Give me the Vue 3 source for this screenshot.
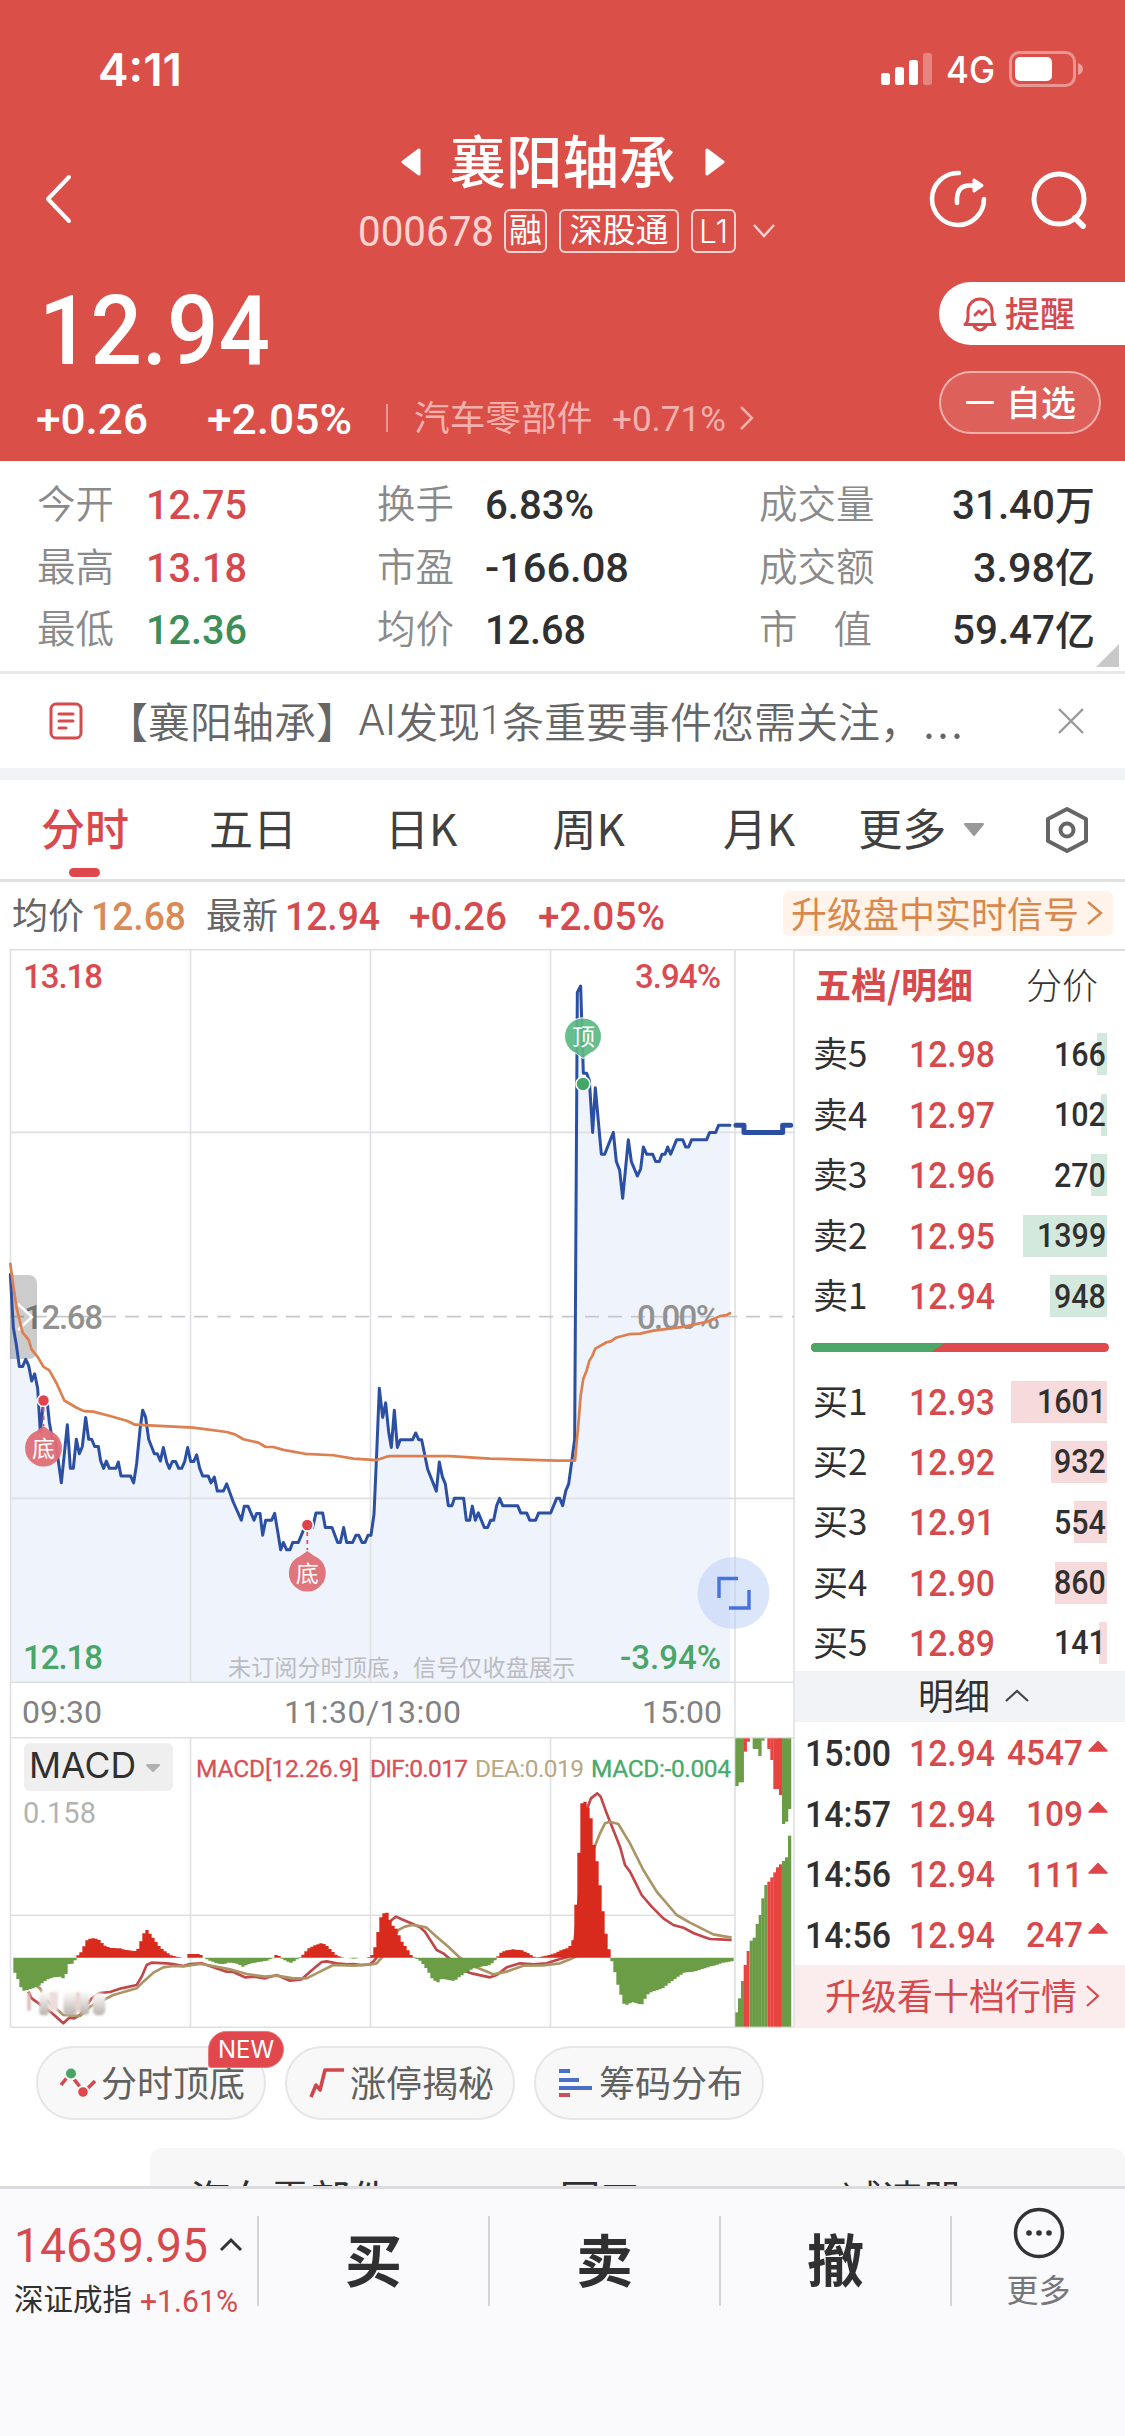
<script setup>
import { h } from 'vue'

// Condensed numeral label: cap height is centred in a box of the font size.
const Num = ({ t, w, s, b = 500, f = 'Roboto' }) =>
  h('svg', { width: w, height: s, viewBox: `0 0 ${w} ${s}`, style: 'display:block;flex:none;overflow:visible' }, [
    h('text', {
      x: 0, y: s * 0.856, 'font-size': s, 'font-weight': b, fill: 'currentColor',
      'font-family': `${f}, "Liberation Sans", sans-serif`, textLength: w, lengthAdjust: 'spacingAndGlyphs'
    }, t)
  ])
Num.props = ['t', 'w', 's', 'b', 'f']

const stats = [
  ['今开', '12.75', 101, 'red', '换手', '6.83%', 109, '成交量', '31.40', 103, '万'],
  ['最高', '13.18', 101, 'red', '市盈', '-166.08', 144, '成交额', '3.98', 82, '亿'],
  ['最低', '12.36', 101, 'green', '均价', '12.68', 101, '市值', '59.47', 103, '亿']
]
const tabs = ['分时', '五日', '日K', '周K', '月K']
const sells = [
  ['卖5', '12.98', '166', 10], ['卖4', '12.97', '102', 6], ['卖3', '12.96', '270', 16],
  ['卖2', '12.95', '1399', 84], ['卖1', '12.94', '948', 57]
]
const buys = [
  ['买1', '12.93', '1601', 96], ['买2', '12.92', '932', 56], ['买3', '12.91', '554', 33],
  ['买4', '12.90', '860', 52], ['买5', '12.89', '141', 8]
]
const deals = [['15:00', '4547'], ['14:57', '109'], ['14:56', '111'], ['14:56', '247']]

// Series are kept on a fine grid (3 units per pixel); PM values start 1170 units in.
const PM = 1170
const join = (am, pm) => {
  const out = []
  for (let i = 0; i < am.length; i += 2) out.push([am[i], am[i + 1]])
  for (let i = 0; i < pm.length; i += 2) out.push([pm[i] + PM, pm[i + 1]])
  return out
}
const path = pts => 'M' + pts.map(p => p.join(' ')).join('L')

const price = join(
  [31,690,40,800,49,835,58,880,68,880,77,865,86,878,95,910,104,895,113,925,121,1015,130,955,142,955,148,995,157,1030,166,1030,184,1120,202,1000,211,1090,220,1090,229,1030,238,1060,247,1045,257,985,266,1030,275,1030,284,1045,295,1045,302,1075,311,1090,319,1075,328,1090,348,1090,355,1077,363,1106,392,1106,401,1120,410,1080,420,1010,428,970,437,985,446,1030,463,1060,472,1060,481,1075,490,1047,500,1077,508,1090,517,1076,527,1076,536,1090,545,1090,554,1076,563,1047,572,1076,581,1076,590,1062,599,1090,608,1106,625,1106,633,1120,643,1108,652,1137,670,1137,680,1122,700,1160,724,1197,733,1168,744,1168,762,1197,770,1183,780,1183,788,1228,797,1197,815,1197,824,1183,833,1220,842,1258,850,1243,860,1258,870,1258,878,1243,895,1243,912,1215,921,1207,938,1212,948,1182,968,1182,976,1212,996,1212,1013,1243,1021,1243,1031,1212,1040,1243,1058,1243,1068,1228,1076,1228,1086,1243,1095,1243,1104,1228,1113,1228,1122,1185,1130,1060,1138,925,1148,985,1157,955,1166,1015],
  [4,1047,13,970,22,1047,31,1031,68,1031,77,1017,86,1031,95,1031,113,1092,139,1137,148,1077,157,1107,166,1122,175,1167,186,1167,193,1152,221,1152,229,1197,239,1197,247,1168,256,1197,265,1182,283,1212,293,1212,302,1197,311,1197,320,1167,329,1152,338,1167,383,1167,392,1182,410,1182,419,1197,437,1197,446,1182,482,1182,500,1152,509,1152,518,1167,527,1137,536,1122,545,1077,554,1030,562,108,572,95,580,275,590,275,598,290,608,397,616,305,634,442,644,442,670,397,679,457,689,475,698,533,715,412,724,457,742,487,752,472,760,427,770,442,788,442,797,457,808,457,816,442,825,442,833,427,842,442,860,412,878,412,887,427,896,427,905,412,950,412,959,397,977,397,986,382,1020,382]
)
const average = join(
  [31,668,38,705,50,760,68,810,86,825,95,845,113,860,130,880,148,888,170,915,193,950,230,965,252,972,280,973,330,982,380,992,405,1000,580,1006,680,1015,705,1020,730,1030,775,1037,797,1046,820,1046,850,1052,915,1060,1000,1063,1060,1070,1130,1073,1160,1066],
  [0,1065,180,1065,300,1070,500,1074,555,1074,565,1000,572,940,580,905,590,888,598,868,607,858,616,843,650,830,662,828,680,820,720,813,750,812,790,806,880,798,950,788,990,776,1010,774,1020,770]
)
const pricePath = path(price)
const areaPath = `${pricePath}V1531H31Z`
const averagePath = path(average)

const dif = path(join(
  [85,965,95,985,155,1028,190,1060,208,1043,222,1045,240,1035,275,985,300,969,330,966,360,956,375,953,410,945,425,920,440,885,455,878,500,880,520,882,550,888,570,882,605,880,640,892,680,905,700,906,735,922,760,920,795,925,830,915,870,932,905,928,930,905,965,876,980,874,1010,880,1040,883,1060,882,1085,885,1110,883,1120,875,1130,862,1145,800,1165,760],
  [5,750,18,740,35,748,60,758,75,765,90,772,105,785,140,840,160,850,175,863,230,905,248,911,300,922,320,915,350,892,390,880,430,883,470,880,500,870,530,862,550,850,575,600,590,420,603,385,622,370,632,380,650,430,670,480,690,530,705,585,720,605,755,675,785,710,820,745,850,765,880,773,910,789,940,800,960,807,990,808,1025,810]
))
const dea = path(join(
  [100,940,120,955,135,985,150,1000,190,1035,240,1038,270,1010,310,990,340,975,410,955,430,935,460,908,490,892,520,888,550,889,600,882,640,888,690,898,740,912,795,920,830,917,880,925,920,925,960,905,1000,885,1060,887,1110,884,1130,880,1145,863],
  [5,810,25,780,45,770,65,765,90,768,110,773,140,800,175,830,210,863,255,890,310,913,350,905,400,887,460,886,510,880,540,868,565,855,590,700,610,540,630,490,645,460,660,455,685,462,720,520,760,600,800,665,860,735,900,758,970,793,1025,803]
))
const histogram = join(
  [40,898,57,935,66,963,90,958,115,948,138,930,160,922,184,920,193,930,205,882,220,880,230,860,247,842,257,814,266,806,284,804,300,812,311,825,330,834,360,835,380,841,410,843,420,822,428,795,440,779,455,798,465,812,480,833,500,848,515,857,545,863,562,863,563,852,600,852,608,863,625,870,650,880,668,882,690,877,715,882,728,890,745,882,780,875,800,872,823,863,825,855,835,856,841,864,852,870,872,878,885,872,897,864,905,858,912,850,925,836,935,830,960,820,975,822,990,838,1003,850,1012,858,1030,863,1060,866,1080,864,1105,862,1120,852,1130,808,1140,745,1158,721,1167,745],
  [8,766,22,780,30,808,50,835,60,853,72,862,90,872,105,890,118,910,125,925,143,938,155,925,175,930,193,932,210,920,230,905,250,895,300,885,320,866,328,850,345,842,370,838,395,841,415,850,435,862,445,862,490,852,510,842,535,833,545,822,555,790,562,548,567,548,571,402,586,394,594,415,603,447,612,530,621,577,630,650,639,728,648,795,657,840,663,866,671,890,680,933,690,965,700,1000,712,1005,725,996,755,1004,770,975,785,965,815,957,850,930,880,908,910,905,960,890,1000,878,1030,873]
)
const valueAt = x => {
  const i = histogram.findIndex(p => p[0] >= x)
  if (i <= 0) return histogram[i === 0 ? 0 : histogram.length - 1][1]
  const [x0, y0] = histogram[i - 1]
  const [x1, y1] = histogram[i]
  return y0 + ((y1 - y0) * (x - x0)) / (x1 - x0)
}
let upBars = ''
let downBars = ''
for (let x = 40; x < 2198; x += 9) {
  const y = Math.round(valueAt(x + 4.5))
  const bar = `M${x} 863V${y}h10V863Z`
  if (y < 863) upBars += bar
  else if (y > 864) downBars += bar
}

// Closing-auction volume columns: x, width, length, colour
const G = '#6b9c46'
const R = '#e8433f'
const topCols = [[1036,9,143,G],[1044,17,132,G],[1061,9,40,R],[1070,9,10,R],[1088,18,32,G],[1105,9,53,G],[1114,9,7,G],[1132,9,32,R],[1141,9,65,R],[1150,18,152,R],[1167,9,170,R],[1176,9,257,G],[1185,9,250,G],[1194,9,212,G]]
const lowCols = [[1036,8,1027,G],[1044,9,985,G],[1053,8,933,G],[1061,9,885,R],[1070,8,843,R],[1079,9,812,G],[1088,9,803,G],[1097,9,762,G],[1106,8,735,G],[1114,9,685,G],[1123,8,645,G],[1132,9,635,R],[1141,9,622,R],[1150,9,607,R],[1158,9,592,R],[1167,8,583,R],[1176,9,573,G],[1185,9,562,G],[1194,9,497,G]]
</script>

<template>
  <div class="app">
    <header class="head">
      <div class="status">
        <Num t="4:11" :w="84" :s="45" :b="600" f="Inter" />
        <div class="status-right">
          <svg width="51" height="34" viewBox="0 0 51 34" fill="#fff">
            <rect x="0" y="21" width="9" height="12" rx="2.5" /><rect x="14" y="15" width="9" height="18" rx="2.5" />
            <rect x="28" y="8" width="9" height="25" rx="2.5" /><rect x="42" y="1" width="9" height="32" rx="2.5" opacity=".3" />
          </svg>
          <Num t="4G" :w="49" :s="37" f="Inter" />
          <svg width="75" height="36" viewBox="0 0 75 36">
            <rect x="1.5" y="1.5" width="64" height="33" rx="9" fill="none" stroke="#fff" stroke-opacity=".4" stroke-width="3" />
            <rect x="6" y="6" width="37" height="24" rx="5" fill="#fff" /><path d="M69 12q5 2 5 6t-5 6z" fill="#fff" opacity=".45" />
          </svg>
        </div>
      </div>

      <div class="nav">
        <svg class="back" width="30" height="52" viewBox="0 0 30 52"><path d="M26 4 5 26 26 48" fill="none" stroke="#fff" stroke-width="4" stroke-linecap="round" stroke-linejoin="round" /></svg>
        <div class="nav-mid">
          <div class="title-row">
            <svg width="20" height="28" viewBox="0 0 20 28"><path d="M18 2v24L2 14Z" fill="#fff" stroke="#fff" stroke-width="3" stroke-linejoin="round" /></svg>
            <h1 class="c">襄阳轴承</h1>
            <svg width="20" height="28" viewBox="0 0 20 28"><path d="M2 2v24L18 14Z" fill="#fff" stroke="#fff" stroke-width="3" stroke-linejoin="round" /></svg>
          </div>
          <div class="sub-row">
            <Num class="code" t="000678" :w="136" :s="42" :b="400" />
            <span class="tag t1"><span class="c">融</span></span>
            <span class="tag t2"><span class="c">深股通</span></span>
            <span class="tag t3"><Num t="L1" :w="29" :s="33" :b="300" f="Inter" /></span>
            <svg width="24" height="16" viewBox="0 0 24 16"><path d="m2 2 10 11L22 2" fill="none" stroke="#fff" stroke-opacity=".75" stroke-width="2.5" /></svg>
          </div>
        </div>
        <div class="nav-icons">
          <svg width="60" height="60" viewBox="-30 -30 60 60" fill="none" stroke="#fff" stroke-width="4.6" stroke-linecap="round" stroke-linejoin="round">
            <path d="M1-26A26 26 0 1 0 26 0" /><path d="M-1 4V-1Q0-13.500 11-13.500H18" /><path d="m16-19 8 5.500-8 5.500Z" fill="#fff" stroke-width="3" />
          </svg>
          <svg width="60" height="60" viewBox="-30 -30 60 60" fill="none" stroke="#fff" stroke-width="5" stroke-linecap="round">
            <circle cx="0" cy="0" r="25" /><path d="m16 19 8 8" stroke-width="6" />
          </svg>
        </div>
      </div>

      <div class="quote">
        <div class="quote-left">
          <Num t="12.94" :w="231" :s="97" />
          <div class="chg">
            <Num t="+0.26" :w="112" :s="43" />
            <Num class="ml-pct" t="+2.05%" :w="145" :s="43" />
            <i class="bar"></i>
            <span class="c sector">汽车零部件</span>
            <Num class="ml-sec" t="+0.71%" :w="114" :s="35" :b="400" />
            <svg width="18" height="26" viewBox="0 0 18 26"><path d="m3 2 11 11L3 24" fill="none" stroke="currentColor" stroke-width="2.5" /></svg>
          </div>
        </div>
        <div class="quote-right">
          <div class="remind">
            <svg width="34" height="36" viewBox="0 0 34 36" fill="none" stroke="#d54a4d" stroke-width="3" stroke-linejoin="round" stroke-linecap="round">
              <path d="M2 28.5H32Q29 26 29 21V15A12 12 0 0 0 5 15V21Q5 26 2 28.5Z" /><path d="M11 30q6 8 12 0M12 19l4-4 3 3 4-4" />
            </svg>
            <span class="c">提醒</span>
          </div>
          <div class="watch"><i></i><span class="c">自选</span></div>
        </div>
      </div>
    </header>

    <section class="stats">
      <div v-for="r in stats" :key="r[0]" class="stat">
        <span class="c lab">{{ r[0] }}</span><Num :class="r[3]" :t="r[1]" :w="r[2]" :s="41" />
        <span class="c lab">{{ r[4] }}</span><Num :t="r[5]" :w="r[6]" :s="41" />
        <span class="c lab" :class="{ spread: r[7].length === 2 }"><b v-for="ch in r[7]" :key="ch">{{ ch }}</b></span>
        <span class="val"><Num :t="r[8]" :w="r[9]" :s="41" /><em class="c">{{ r[10] }}</em></span>
      </div>
      <i class="corner"></i>
    </section>

    <section class="notice">
      <svg width="34" height="38" viewBox="0 0 34 38" fill="none" stroke="#d54a4d" stroke-width="3" stroke-linecap="round">
        <rect x="2" y="2" width="30" height="34" rx="5" /><path d="M10 12h14M10 19h14M10 26h7" />
      </svg>
      <p class="c">【襄阳轴承】<Num t="AI" :w="38" :s="42" :b="300" f="Inter" />发现<Num t="1" :w="22" :s="41" :b="300" />条重要事件您需关注，<Num t="..." :w="42" :s="52" :b="300" f="Inter" /></p>
      <svg width="28" height="28" viewBox="0 0 28 28"><path d="M2 2l24 24M26 2 2 26" stroke="#999" stroke-width="2.4" /></svg>
    </section>

    <nav class="tabs">
      <span v-for="(t, i) in tabs" :key="t" class="c tab" :class="{ on: i === 0 }">{{ t }}</span>
      <span class="c tab">更多</span>
      <svg width="24" height="18" viewBox="0 0 24 18"><path d="M3 3h18l-9 11z" fill="#999" stroke="#999" stroke-width="2" stroke-linejoin="round" /></svg>
      <svg class="gear" width="46" height="50" viewBox="-23 -25 46 50" fill="none" stroke="#666" stroke-width="4" stroke-linejoin="round">
        <path d="M0-21 19-11V11L0 21-19 11V-11Z" /><circle r="6.5" />
      </svg>
    </nav>

    <section class="avg">
      <span class="c">均价</span><Num class="orange" t="12.68" :w="95" :s="38" />
      <span class="c new">最新</span><Num class="red" t="12.94" :w="95" :s="38" />
      <Num class="red p1" t="+0.26" :w="98" :s="38" /><Num class="red p2" t="+2.05%" :w="127" :s="38" />
      <div class="upgrade"><span class="c">升级盘中实时信号</span><svg width="16" height="28" viewBox="0 0 16 28"><path d="m1 3 13 11L1 25" fill="none" stroke="#d9884c" stroke-width="2.4" /></svg></div>
    </section>

    <section class="main">
      <svg class="chart" width="795" height="1079" viewBox="0 949 795 1079">
        <defs>
          <filter id="smear" x="-20%" y="-20%" width="140%" height="140%"><feGaussianBlur stdDeviation="2.4" /></filter>
          <linearGradient id="fade" x1="0" y1="0" x2="0" y2="1"><stop offset="0" stop-color="#fff" /><stop offset=".4" stop-color="#e6e2df" /><stop offset="1" stop-color="#b9b2ad" /></linearGradient>
        </defs>
        <g transform="translate(0 940) scale(.33333 .4847)"><path :d="areaPath" fill="#eef3fc" /></g>
        <g stroke="#dfe0e3" stroke-width="1.6" fill="none">
          <path d="M10.5 949V2027M190.5 949V1682M370.5 949V1682M550.5 949V1682M190.5 1738V2027M370.5 1738V2027M550.5 1738V2027M735 949V2027M794 949V2027" />
          <path d="M10 949.8H795M10 1132.4H794M10 1498.4H794M10 1682.3H794M10 1737.7H794M10 1915.3H735M10 2027.2H794" />
          <path d="M10 1316.6H794" stroke="#c6c8cb" stroke-dasharray="14 9" />
        </g>

        <g font-family="Roboto, sans-serif" font-size="33" font-weight="500" fill="#919191">
          <text x="24" y="1328.6" textLength="79">12.68</text><text x="637" y="1328.6" textLength="83">0.00%</text>
        </g>
        <path d="M10 1275H28q9 0 9 9V1350q0 9-9 9H10Z" fill="#000" opacity=".2" />
        <path d="m18 1304 14 13-14 13" fill="none" stroke="#fff" stroke-width="2.5" />

        <g transform="translate(0 940) scale(.33333 .4847)" fill="none" stroke-linejoin="round" stroke-linecap="round">
          <path :d="pricePath" stroke="#2b50a3" stroke-width="3" vector-effect="non-scaling-stroke" />
          <path :d="averagePath" stroke="#dd7f50" stroke-width="2.7" vector-effect="non-scaling-stroke" />
          <path d="M2208 382h24v15h116v-15h24" stroke="#2b50a3" stroke-width="5" vector-effect="non-scaling-stroke" />
        </g>

        <g fill="#e06c75" fill-opacity=".94">
          <path d="M43.5 1426l7 5a18.5 18.5 0 1 1-14 0z" /><path d="M307.3 1551l7 5a18.5 18.5 0 1 1-14 0z" />
        </g>
        <path d="M43.5 1408v18M307.3 1532v18" stroke="#d95560" stroke-width="1.8" stroke-dasharray="4 4" />
        <path d="M583 1058.5l-7-5a18.5 18.5 0 1 1 14 0z" fill="#5cb884" fill-opacity=".92" stroke="#fff" stroke-width="1" />
        <g stroke="#fff" stroke-width="1.6"><circle cx="43.5" cy="1400.5" r="6" fill="#e0434b" /><circle cx="307.3" cy="1525" r="6" fill="#e0434b" /><circle cx="583" cy="1084" r="7" fill="#43a866" /></g>
        <g font-family="'Noto Sans CJK SC', sans-serif" font-size="23" fill="#fff" text-anchor="middle">
          <text x="43.5" y="1457">底</text><text x="307.3" y="1582">底</text><text x="583.5" y="1044.5">顶</text>
        </g>

        <g font-family="Roboto, sans-serif" font-size="33" font-weight="500">
          <g fill="#d94b50"><text x="23" y="987.5" textLength="80">13.18</text><text x="635" y="987.5" textLength="86">3.94%</text></g>
          <g fill="#4aa568"><text x="23" y="1668.5" textLength="80">12.18</text><text x="620" y="1668.5" textLength="101">-3.94%</text></g>
          <g fill="#828282" font-size="32" font-weight="400"><text x="22" y="1722.5" textLength="80">09:30</text><text x="284" y="1722.5" textLength="177">11:30/13:00</text><text x="642" y="1722.5" textLength="80">15:00</text></g>
          <text x="23" y="1823" font-size="29" font-weight="400" fill="#b3b3b3" textLength="73">0.158</text>
        </g>
        <text x="228" y="1676" font-size="23.1" fill="#bbbcc2" font-family="'Noto Sans CJK SC', sans-serif" textLength="347">未订阅分时顶底，信号仅收盘展示</text>

        <rect x="24" y="1743" width="149" height="48" rx="6" fill="#efefef" />
        <text x="29" y="1778" font-family="Inter, sans-serif" font-size="35.5" fill="#303030" textLength="107">MACD</text>
        <path d="M147 1765h12l-6 6z" fill="#b0b0b0" stroke="#b0b0b0" stroke-width="2" stroke-linejoin="round" />
        <g font-family="Roboto, sans-serif" font-size="24.5" font-weight="400">
          <g fill="#d95157" stroke="#d95157" stroke-width=".3"><text x="196" y="1777" textLength="163">MACD[12.26.9]</text><text x="370" y="1777" textLength="98">DIF:0.017</text></g>
          <text x="475" y="1777" fill="#b9a783" textLength="109">DEA:0.019</text><text x="591" y="1777" fill="#47ab6c" stroke="#47ab6c" stroke-width=".3" textLength="140">MACD:-0.004</text>
        </g>

        <g transform="translate(0 1670) scale(.33333)">
          <g fill="none" stroke-width="8" stroke-linejoin="round"><path :d="dif" stroke="#c2474a" /><path :d="dea" stroke="#ab9566" /></g>
          <path :d="upBars" fill="#d92b1d" /><path :d="downBars" :fill="G" />
          <g filter="url(#smear)" fill="url(#fade)">
            <rect x="82" y="966" width="10" height="56" fill="#dcb7b4" /><rect x="118" y="962" width="28" height="74" rx="10" />
            <rect x="148" y="966" width="26" height="58" fill="#efdcda" /><rect x="190" y="962" width="40" height="74" rx="12" />
            <rect x="228" y="966" width="14" height="60" fill="#e8d5cf" /><rect x="240" y="962" width="28" height="72" rx="10" /><rect x="278" y="968" width="38" height="68" rx="16" />
          </g>
          <g transform="translate(1170 0)">
            <rect v-for="(c, i) in topCols" :key="'t' + i" :x="c[0]" y="205" :width="c[1] + .8" :height="c[2]" :fill="c[3]" />
            <rect v-for="(c, i) in lowCols" :key="'l' + i" :x="c[0]" :y="c[2]" :width="c[1] + .8" :height="1070 - c[2]" :fill="c[3]" />
          </g>
        </g>

        <circle cx="733.5" cy="1593" r="36" fill="#b9cdf8" opacity=".5" />
        <path d="M719 1598V1578.5H738M729 1608H749V1590" fill="none" stroke="#4673e0" stroke-width="3.4" />
      </svg>

      <aside class="book">
        <div class="book-head"><span class="c">五档/明细</span><span class="c thin">分价</span></div>
        <div v-for="r in sells" :key="r[0]" class="level">
          <span class="c">{{ r[0] }}</span><Num class="red" :t="r[1]" :w="86" :s="36" />
          <span class="vol"><i class="depth down" :style="{ width: r[3] + 'px' }"></i><Num :t="r[2]" :w="r[2].length * 17.3" :s="33" /></span>
        </div>
        <svg class="ratio" width="298" height="9" viewBox="0 0 298 9">
          <rect width="298" height="9" rx="4.5" fill="#de4a4d" /><path d="M4.5 0H134L120 9H4.5A4.5 4.5 0 0 1 4.5 0Z" fill="#4aa765" />
        </svg>
        <div v-for="r in buys" :key="r[0]" class="level buy">
          <span class="c">{{ r[0] }}</span><Num class="red" :t="r[1]" :w="86" :s="36" />
          <span class="vol"><i class="depth up" :style="{ width: r[3] + 'px' }"></i><Num :t="r[2]" :w="r[2].length * 17.3" :s="33" /></span>
        </div>
        <div class="band"><span class="c">明细</span><svg width="24" height="14" viewBox="0 0 24 14"><path d="M1 12 12 2l11 10" fill="none" stroke="#444" stroke-width="2.2" /></svg></div>
        <div v-for="(d, i) in deals" :key="i" class="deal">
          <Num :t="d[0]" :w="86" :s="36" /><Num class="red" t="12.94" :w="86" :s="36" />
          <span class="red dv"><Num :t="d[1]" :w="d[1].length * 19" :s="35" /><svg width="22" height="14" viewBox="0 0 22 14"><path d="m11 1.5 9 9.500H2z" fill="#dd4548" stroke="#dd4548" stroke-width="1.5" stroke-linejoin="round" /></svg></span>
        </div>
        <div class="ten"><span class="c">升级看十档行情</span><svg width="15" height="24" viewBox="0 0 15 24"><path d="m2 2 11 10L2 22" fill="none" stroke="#d54a4d" stroke-width="2.2" /></svg></div>
      </aside>
    </section>

    <section class="chips">
      <div class="chip">
        <svg width="36" height="30" viewBox="0 0 36 30"><path d="M1 17 10 6 24 24 35 13" fill="none" stroke="#d1494e" stroke-width="3.5" /><circle cx="11" cy="5.5" r="6" fill="#48a566" stroke="#f8f8f8" stroke-width="2" /><circle cx="23" cy="24" r="5.8" fill="#de484c" stroke="#f8f8f8" stroke-width="2" /></svg>
        <span class="c">分时顶底</span><em class="new-badge">NEW</em>
      </div>
      <div class="chip">
        <svg width="36" height="30" viewBox="0 0 36 30"><path d="M2 29 7 17l4 5 5-20H35" fill="none" stroke="#cf464b" stroke-width="3.6" stroke-linejoin="round" /></svg>
        <span class="c">涨停揭秘</span>
      </div>
      <div class="chip">
        <svg width="36" height="30" viewBox="0 0 36 30" stroke-width="4"><path d="M1 3h11M1 12h20M1 20h33" stroke="#4a6fc9" /><path d="M1 27h11" stroke="#c9525a" /></svg>
        <span class="c">筹码分布</span>
      </div>
    </section>

    <section class="peek"><div class="card"><span>汽车零部件</span><span>军工</span><span>减速器</span></div></section>

    <footer class="foot">
      <div class="index">
        <div class="l1"><Num class="red" t="14639.95" :w="194" :s="48" :b="450" /><svg width="24" height="16" viewBox="0 0 24 16"><path d="m2 13 10-10 10 10" fill="none" stroke="#333" stroke-width="3" /></svg></div>
        <div class="l2"><span class="c">深证成指</span><Num class="red" t="+1.61%" :w="98" :s="31" :b="450" /></div>
      </div>
      <div class="act"><span class="c">买</span></div>
      <div class="act"><span class="c">卖</span></div>
      <div class="act"><span class="c">撤</span></div>
      <div class="more">
        <svg width="54" height="54" viewBox="-27 -27 54 54"><circle r="23.5" fill="none" stroke="#333" stroke-width="3.5" /><circle cx="-10" r="2.8" fill="#333" /><circle r="2.8" fill="#333" /><circle cx="10" r="2.8" fill="#333" /></svg>
        <span class="c">更多</span>
      </div>
    </footer>
  </div>
</template>

<style>
body { background: #fff; }
</style>

<style scoped>
.app { width: 1125px; height: 2436px; overflow: hidden; display: flex; flex-direction: column; background: #fff; color: #303030; font-family: "Noto Sans CJK SC", sans-serif; }
.app * { box-sizing: border-box; }
.app svg { flex: none; display: block; }
.c { display: block; line-height: 1; padding-bottom: .13em; white-space: nowrap; flex: none; }
.red { color: #d64a4e; }
.green { color: #3d8f57; }
.orange { color: #da8a55; }

.head { height: 461px; flex: none; background: #db4f49; color: #fff; }
.status { height: 133px; padding: 5px 41px 0 98px; display: flex; align-items: center; justify-content: space-between; }
.status-right { display: flex; align-items: center; gap: 14px; }
.nav { height: 131px; display: grid; grid-template-columns: 300px 525px 300px; align-items: center; }
.back { margin-left: 43px; }
.nav-mid { align-self: start; }
.title-row { height: 58px; display: flex; align-items: center; justify-content: center; gap: 29px; }
h1 { margin: 0; font-size: 56.5px; font-weight: 500; }
.sub-row { margin-top: 18px; padding-left: 58px; height: 44px; display: flex; align-items: center; }
.code { color: #fbd3d1; margin-right: 10px; }
.tag { height: 44px; border: 2px solid rgba(255, 255, 255, .75); border-radius: 6px; display: flex; align-items: center; justify-content: center; font-size: 33px; margin-right: 12px; }
.t1 { width: 43px; } .t2 { width: 120px; } .t3 { width: 45px; margin-right: 16px; }
.nav-icons { display: flex; justify-content: flex-end; gap: 41px; padding-right: 36px; }
.quote { display: flex; justify-content: space-between; height: 197px; }
.quote-left { padding: 17px 0 0 39px; }
.chg { margin: 18px 0 0 -3px; height: 44px; display: flex; align-items: center; }
.ml-pct { margin-left: 59px; }
.bar { width: 2px; height: 28px; background: rgba(255, 255, 255, .4); margin: 0 26px 0 34px; }
.sector { font-size: 35.7px; }
.sector, .ml-sec, .ml-sec + svg { color: #f3b1ad; }
.ml-sec { margin-left: 20px; margin-right: 12px; }
.quote-right { width: 186px; padding-top: 18px; font-size: 35px; font-weight: 500; }
.remind { height: 63px; border-radius: 32px 0 0 32px; background: #fff; color: #d54a4d; display: flex; align-items: center; padding-left: 24px; gap: 8px; }
.watch { margin-top: 26px; width: 162px; height: 63px; border-radius: 32px; border: 2px solid rgba(255, 255, 255, .5); background: rgba(255, 255, 255, .1); display: flex; align-items: center; padding-left: 25px; }
.watch i { width: 28px; height: 3px; background: #fff; margin-right: 12px; }

.stats { position: relative; height: 213px; flex: none; padding-top: 12px; border-bottom: 3px solid #e9e9eb; }
.stat { height: 62.7px; padding: 0 30px 0 37px; display: grid; grid-template-columns: 109px 231px 108px 274px 113px 1fr; align-items: center; }
.stat .lab { font-size: 38.5px; color: #8a8a8a; font-weight: 350; display: flex; padding-bottom: .17em; }
.stat .val { justify-self: end; display: flex; align-items: center; }
.stat .lab b { font-weight: inherit; }
.spread { justify-content: space-between; }
.val em { font-style: normal; font-size: 40px; font-weight: 500; padding-bottom: .09em; }
.corner { position: absolute; right: 6px; bottom: 4px; border-left: 23px solid transparent; border-bottom: 23px solid #c9c9c9; }

.notice { height: 106px; flex: none; padding: 0 40px 0 49px; display: flex; align-items: center; border-bottom: 12px solid #f2f3f6; }
.notice p { margin: 0 auto 0 23px; font-size: 42px; color: #666; display: flex; align-items: center; font-weight: 350; padding-bottom: .07em; }

.tabs { height: 102px; flex: none; border-bottom: 3px solid #e2e2e4; display: flex; align-items: center; padding-left: 41px; color: #404040; font-size: 44px; }
.tab:nth-child(2) { margin-left: 80px; } .tab:nth-child(3) { margin-left: 88px; }
.tab:nth-child(4) { margin-left: 95px; } .tab:nth-child(5) { margin-left: 98px; }
.tab:nth-child(6) { margin: 0 16px 0 63px; }
.tab.on { color: #d8484d; font-weight: 500; position: relative; }
.tab.on::after { content: ""; position: absolute; left: 28px; bottom: -23px; width: 31px; height: 9px; border-radius: 5px; background: #de484d; }
.gear { margin-left: 58px; }

.avg { height: 67px; flex: none; display: flex; align-items: center; padding-left: 12px; font-size: 36px; color: #666; }
.avg .orange { margin-left: 7px; }
.new { margin-left: 20px; margin-right: 7px; }
.p1 { margin-left: 29px; } .p2 { margin-left: 31px; }
.upgrade { margin: -5px 12px 0 auto; width: 330px; height: 45px; border-radius: 6px; background: #fff3ea; color: #d9884c; display: flex; align-items: center; padding-left: 8px; gap: 8px; font-size: 36px; }
.upgrade .c { padding-bottom: .08em; }

.main { display: grid; grid-template-columns: 795px 330px; height: 1079px; flex: none; }
.book { border-top: 2px solid #dcdde0; font-size: 35px; }
.book-head { height: 73px; padding: 0 27px 5px 20px; display: flex; align-items: center; justify-content: space-between; color: #d64a4e; font-size: 36px; font-weight: 700; }
.thin { color: #333; font-weight: 300; }
.level { height: 60.5px; display: grid; grid-template-columns: 96px 86px 1fr; align-items: center; padding: 0 18px 0 18px; }
.level.buy { height: 60.3px; }
.vol { position: relative; height: 42px; display: flex; align-items: center; justify-content: flex-end; padding-right: 1px; }
.depth { position: absolute; right: 0; top: 0; height: 42px; }
.vol > svg { position: relative; }
.down { background: #d4e9de; } .up { background: #f6dadc; }
.ratio { margin: 16px 0 20px 16px; }
.band { height: 51px; background: #f2f3f7; display: flex; align-items: center; padding-left: 123px; gap: 15px; font-size: 36px; margin-top: -2px; }
.deal { height: 60.7px; display: grid; grid-template-columns: 104px 86px 1fr; align-items: center; padding: 1px 16px 0 10px; }
.dv { display: flex; justify-content: flex-end; gap: 4px; }
.dv > svg:last-child { margin-top: 5px; }
.ten { height: 63px; background: #fbecee; color: #d54a4d; display: flex; align-items: center; padding-left: 30px; gap: 8px; font-size: 36px; }

.chips { height: 120px; flex: none; display: flex; gap: 19px; padding: 18px 0 0 36px; }
.chip { position: relative; width: 230px; height: 74px; border: 2px solid #e6e6e8; border-radius: 37px; background: #f8f8f8; display: flex; align-items: center; padding-left: 22px; gap: 5px; font-size: 36px; color: #616161; }
.new-badge { position: absolute; left: 170px; top: -17px; width: 76px; height: 37px; border-radius: 19px 19px 19px 3px; background: #e0484d; color: #fff; font: 400 24px/36px Inter, sans-serif; text-align: center; border: 1px solid #e9777a; }
.peek { height: 38px; flex: none; overflow: hidden; padding-left: 150px; }
.card { height: 120px; border-radius: 12px; background: #f7f7f8; display: grid; grid-template-columns: 370px 282px 1fr; padding: 24px 0 0 40px; font-size: 40px; line-height: 50px; }
.foot { height: 250px; flex: none; background: #fafafd; border-top: 3px solid #dcdcde; display: flex; padding-top: 27px; }
.index { width: 257px; padding-left: 14px; }
.index div { display: flex; align-items: center; justify-content: space-between; }
.index .l1 { height: 57px; padding-right: 14px; }
.index .l2 { height: 54px; padding-right: 19px; font-size: 29.5px; }
.act { height: 90px; width: 231px; border-left: 2px solid #d4d4d6; display: flex; align-items: center; justify-content: center; font-size: 57px; font-weight: 700; }
.more { flex: 1; border-left: 2px solid #d4d4d6; height: 90px; display: flex; flex-direction: column; align-items: center; font-size: 32px; color: #777; }
.more svg { margin: -10px 0 12px; }
</style>
